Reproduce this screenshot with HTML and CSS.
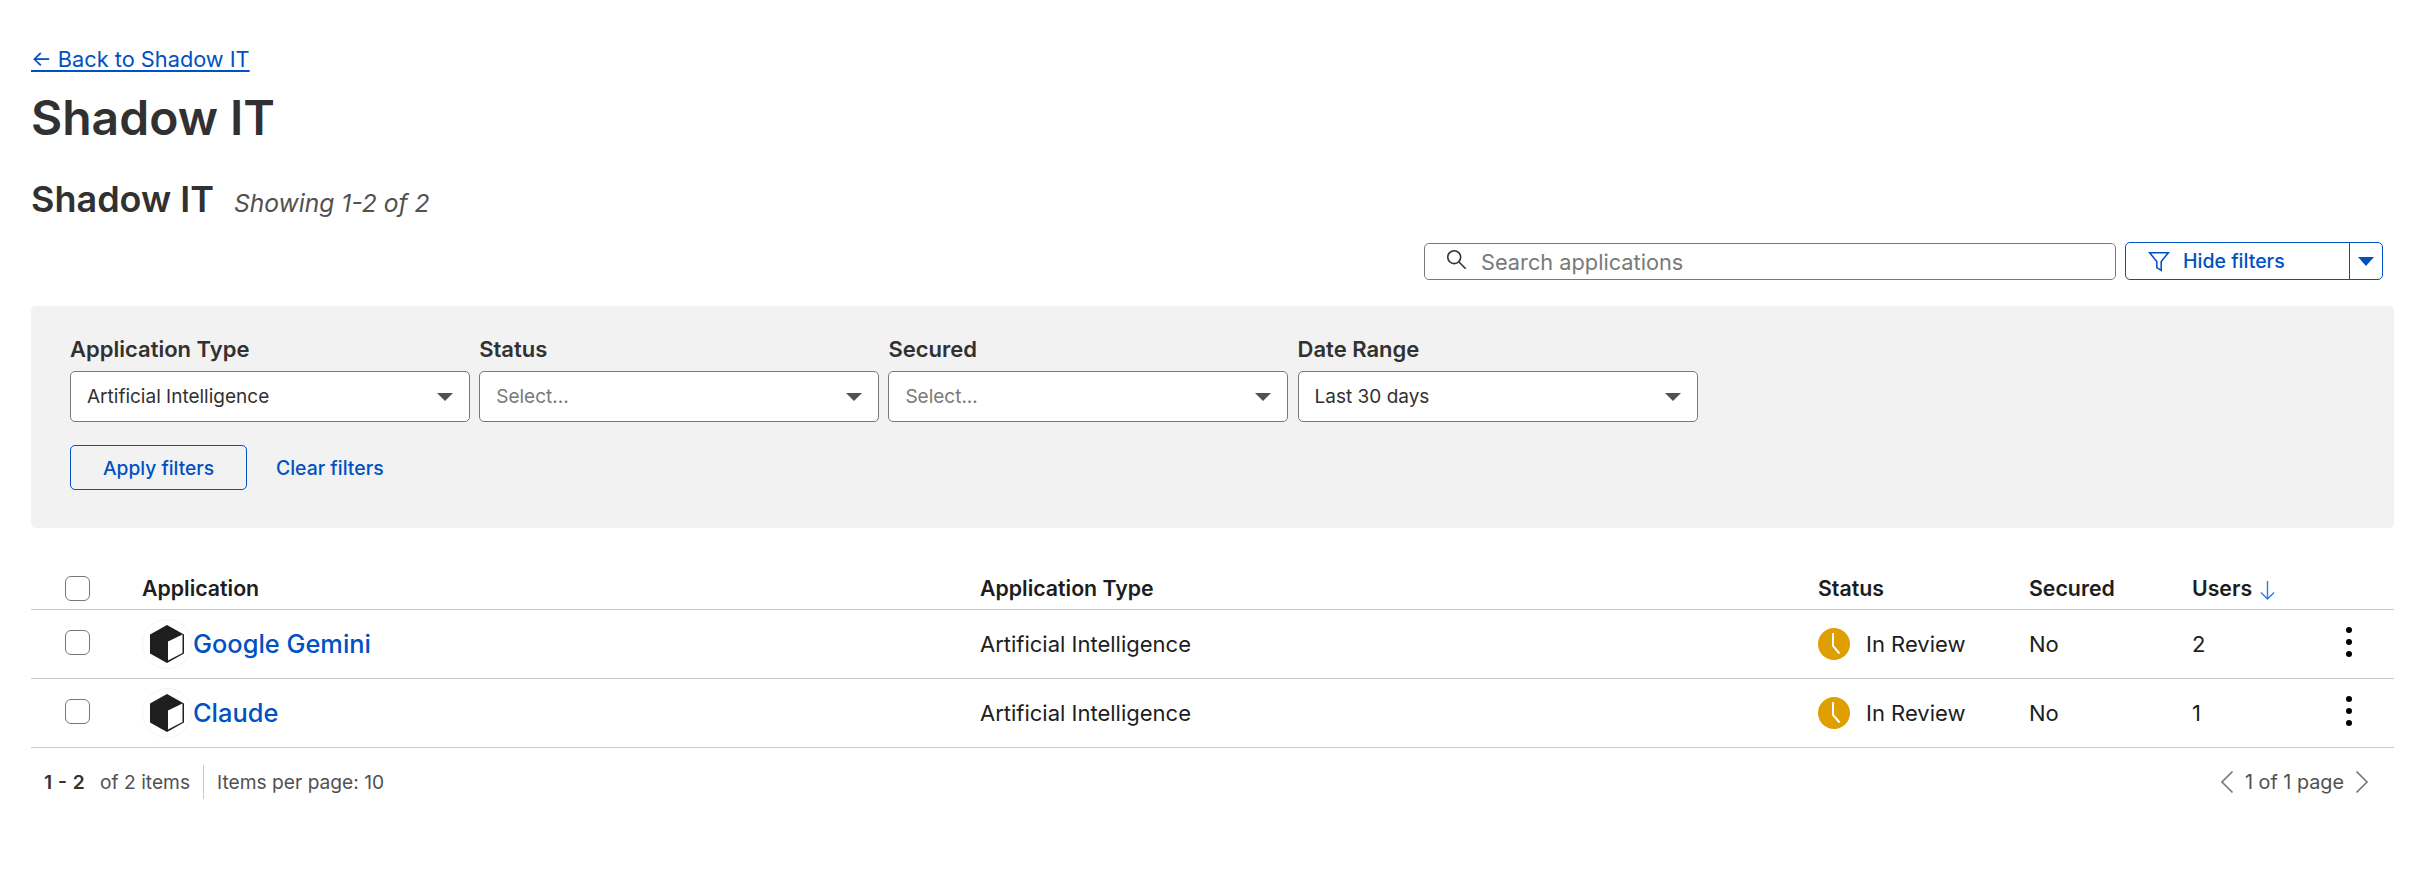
FILE: index.html
```html
<!DOCTYPE html>
<html>
  <head>
    <meta name="viewport" content="width=device-width,initial-scale=1.0">
    <title>Shadow IT</title>
    <link rel="stylesheet" href="styles.css">
  </head>

  <body>
    <a class="back-link" href="#">← Back to Shadow IT</a>
    <h1>Shadow IT</h1>

    <div class="section-head">
      <h2>Shadow IT</h2>
      <span class="showing">Showing 1-2 of 2</span>
    </div>

    <!-- Search and filter toggle -->
    <div class="toolbar">
      <div class="search">
        <svg class="search-icon" viewBox="0 0 20 20"><circle cx="8" cy="8" r="5.6"/><path d="M12 12l6 6"/></svg>
        <span>Search applications</span>
      </div>
      <div class="split-btn">
        <div class="split-main">
          <svg class="funnel" viewBox="0 0 20 20"><path d="M1.5 2.500h17l-6.500 8v8l-4-2.500v-5.500z"/></svg>
          Hide filters
        </div>
        <div class="split-caret"><i class="caret"></i></div>
      </div>
    </div>

    <!-- Filters -->
    <div class="filters">
      <div class="filter-row">
        <div class="filter">
          <label>Application Type</label>
          <div class="select">Artificial Intelligence<i class="caret"></i></div>
        </div>
        <div class="filter">
          <label>Status</label>
          <div class="select placeholder">Select...<i class="caret"></i></div>
        </div>
        <div class="filter">
          <label>Secured</label>
          <div class="select placeholder">Select...<i class="caret"></i></div>
        </div>
        <div class="filter">
          <label>Date Range</label>
          <div class="select">Last 30 days<i class="caret"></i></div>
        </div>
      </div>
      <div class="filter-actions">
        <button class="apply-btn">Apply filters</button>
        <a class="clear-link" href="#">Clear filters</a>
      </div>
    </div>

    <!-- Table -->
    <table class="apps">
      <thead>
        <tr>
          <th class="col-check"><span class="checkbox"></span></th>
          <th class="col-app">Application</th>
          <th class="col-type">Application Type</th>
          <th class="col-status">Status</th>
          <th class="col-secured">Secured</th>
          <th class="col-users">Users
            <svg class="sort" viewBox="0 0 15 20"><path d="M7.500 1v18M1 12.500L7.500 19l6.500-6.500"/></svg>
          </th>
          <th class="col-menu"></th>
        </tr>
      </thead>
      <tbody>
        <tr>
          <td><span class="checkbox"></span></td>
          <td>
            <div class="app-cell">
              <span class="app-logo">
                <svg viewBox="0 0 34 38"><path class="cube" d="M17 0L34 9.500V28.500L17 38L0 28.500V9.500z"/><path class="face" d="M18 16.500L32.500 9.500V28L18 35.500z"/></svg>
              </span>
              <a href="#">Google Gemini</a>
            </div>
          </td>
          <td>Artificial Intelligence</td>
          <td>
            <div class="status">
              <svg class="clock" viewBox="0 0 32 32"><circle cx="16" cy="16" r="16"/><path d="M15 5v13l6.500 7.500"/></svg>
              In Review
            </div>
          </td>
          <td>No</td>
          <td>2</td>
          <td><div class="dots"><i></i><i></i><i></i></div></td>
        </tr>
        <tr>
          <td><span class="checkbox"></span></td>
          <td>
            <div class="app-cell">
              <span class="app-logo">
                <svg viewBox="0 0 34 38"><path class="cube" d="M17 0L34 9.500V28.500L17 38L0 28.500V9.500z"/><path class="face" d="M18 16.500L32.500 9.500V28L18 35.500z"/></svg>
              </span>
              <a href="#">Claude</a>
            </div>
          </td>
          <td>Artificial Intelligence</td>
          <td>
            <div class="status">
              <svg class="clock" viewBox="0 0 32 32"><circle cx="16" cy="16" r="16"/><path d="M15 5v13l6.500 7.500"/></svg>
              In Review
            </div>
          </td>
          <td>No</td>
          <td>1</td>
          <td><div class="dots"><i></i><i></i><i></i></div></td>
        </tr>
      </tbody>
    </table>

    <!-- Pagination -->
    <div class="pager">
      <div class="pager-left">
        <span class="range"><b>1 - 2</b> of 2 items</span>
        <span class="per-page">Items per page: 10</span>
      </div>
      <div class="pager-right">
        <svg class="chev" viewBox="0 0 14 24"><path d="M12.500 1.500L2 12l10.500 10.500"/></svg>
        <span>1 of 1 page</span>
        <svg class="chev" viewBox="0 0 14 24"><path d="M1.500 1.500L12 12 1.500 22.500"/></svg>
      </div>
    </div>
  </body>
</html>
```

FILE: styles.css
```css
body {
  margin: 0;
  padding: 47px 26px 0 31px;
  font-family: Inter, "Liberation Sans", sans-serif;
  color: #313131;
  background: #fff;
}

a { color: #0051c3; text-decoration: none; }

.back-link {
  display: block;
  width: max-content;
  font-size: 21.75px;
  line-height: 24px;
  text-decoration: underline;
  text-underline-offset: 3px;
}

h1 {
  margin: 17px 0 0;
  font-size: 48px;
  line-height: 60px;
  font-weight: 600;
}

.section-head {
  display: flex;
  align-items: baseline;
  gap: 20px;
  margin-top: 29px;
}

h2 {
  margin: 0;
  font-size: 36px;
  line-height: 44px;
  font-weight: 600;
}

.showing {
  font-size: 24.6px;
  font-style: italic;
  color: #515151;
}

/* Search and filter toggle */
.toolbar {
  display: flex;
  justify-content: flex-end;
  gap: 9px;
  margin: 21px 11px 0 0;
}

.search {
  width: 692px;
  height: 37px;
  box-sizing: border-box;
  margin-top: 1px;
  padding-left: 20px;
  display: flex;
  align-items: center;
  gap: 13px;
  border: 1px solid #797979;
  border-radius: 5px;
  font-size: 21.75px;
  color: #797979;
}

.search-icon { width: 23px; height: 23px; margin-top: -4px; fill: none; stroke: #313131; stroke-width: 1.4; }

.split-btn {
  width: 258px;
  height: 38px;
  box-sizing: border-box;
  display: flex;
  border: 1px solid #0051c3;
  border-radius: 5px;
  color: #0051c3;
  font-size: 19.5px;
}

.split-main {
  flex: 1;
  display: flex;
  align-items: center;
  gap: 13px;
  padding-left: 22px;
  font-weight: 500;
  border-right: 1px solid #0051c3;
}

.funnel { width: 22px; height: 22px; fill: none; stroke: #0051c3; stroke-width: 1.4; }

.split-caret { width: 32px; display: flex; align-items: center; justify-content: center; }
.split-caret .caret { border-top-color: #0051c3; border-width: 9px 8px 0; margin: 0; }

.caret {
  display: block;
  width: 0;
  height: 0;
  margin-left: auto;
  border-style: solid;
  border-width: 8px 8px 0;
  border-color: #515151 transparent transparent;
}

/* Filters */
.filters {
  margin-top: 26px;
  height: 222px;
  box-sizing: border-box;
  padding: 30px 39px 0;
  background: #f2f2f2;
  border-radius: 5px;
}

.filter-row { display: flex; gap: 9.2px; }

.filter { width: 400px; }

.filter label {
  display: block;
  font-size: 22px;
  line-height: 26px;
  font-weight: 600;
  margin-bottom: 9px;
}

.select {
  height: 51px;
  box-sizing: border-box;
  display: flex;
  align-items: center;
  padding: 0 16px;
  background: #fff;
  border: 1px solid #797979;
  border-radius: 5px;
  font-size: 19px;
}

.select.placeholder { color: #797979; }

.filter-actions {
  display: flex;
  align-items: center;
  gap: 29px;
  margin-top: 23px;
}

.apply-btn {
  width: 177px;
  height: 45px;
  background: transparent;
  border: 1px solid #0051c3;
  border-radius: 5px;
  color: #0051c3;
  font-family: inherit;
  font-size: 19.2px;
  font-weight: 500;
}

.clear-link { font-size: 19.4px; font-weight: 500; }

/* Table */
.apps {
  width: 100%;
  margin-top: 37px;
  border-collapse: collapse;
  table-layout: fixed;
  color: #1d1d1d;
}

.apps th {
  height: 44px;
  padding: 2px 0 0;
  box-sizing: border-box;
  text-align: left;
  font-size: 21.3px;
  font-weight: 600;
  border-bottom: 1px solid #cacaca;
}

.apps td {
  height: 68px;
  padding: 0;
  font-size: 22px;
  border-bottom: 1px solid #cacaca;
}

.col-check { width: 111px; }
.col-app { width: 838px; }
.col-type { width: 838px; }
.col-status { width: 211px; }
.col-secured { width: 163px; }
.col-users { width: 155px; }

.checkbox {
  display: block;
  width: 25px;
  height: 25px;
  box-sizing: border-box;
  margin-left: 34px;
  background: #fff;
  border: 1px solid #797979;
  border-radius: 6px;
}

.apps th .checkbox { margin-top: 2px; }
.apps td .checkbox { margin-top: -2px; }

.app-cell { display: flex; align-items: center; gap: 1px; }

.app-cell a { font-size: 25.4px; font-weight: 500; }

.app-logo {
  width: 50px;
  height: 50px;
  display: flex;
  align-items: center;
  justify-content: center;
  border-radius: 50%;
  box-sizing: border-box;
  border: 1px solid #f5f5f5;
}

.app-logo svg { width: 34px; height: 38px; }
.cube { fill: #1d1f20; }
.face { fill: #fff; }

.status { display: flex; align-items: center; gap: 16px; }

.clock { width: 32px; height: 32px; }
.clock circle { fill: #e09f00; }
.clock path { fill: none; stroke: #fff; stroke-width: 2; }

.sort { width: 15px; height: 20px; margin-left: 3px; vertical-align: -4px; fill: none; stroke: #2c7cf6; stroke-width: 1.4; }

.dots { display: flex; flex-direction: column; align-items: center; gap: 6px; width: 12px; margin-left: -4px; margin-top: -4px; }
.dots i { width: 6px; height: 6px; background: #000; border-radius: 50%; }

/* Pagination */
.pager {
  display: flex;
  justify-content: space-between;
  align-items: center;
  margin-top: 17px;
  font-size: 19.2px;
  color: #515151;
}

.pager-left { display: flex; align-items: center; padding-left: 13px; }
.pager-left b { color: #313131; font-weight: 600; margin-right: 10px; word-spacing: 1px; }

.range { padding-right: 13px; border-right: 1px solid #cacaca; line-height: 34px; }
.per-page { padding-left: 13px; }

.pager-right { display: flex; align-items: center; gap: 11px; padding-right: 25px; font-size: 19.8px; }

.chev { width: 14px; height: 24px; fill: none; stroke: #797979; stroke-width: 1.7; }
```
